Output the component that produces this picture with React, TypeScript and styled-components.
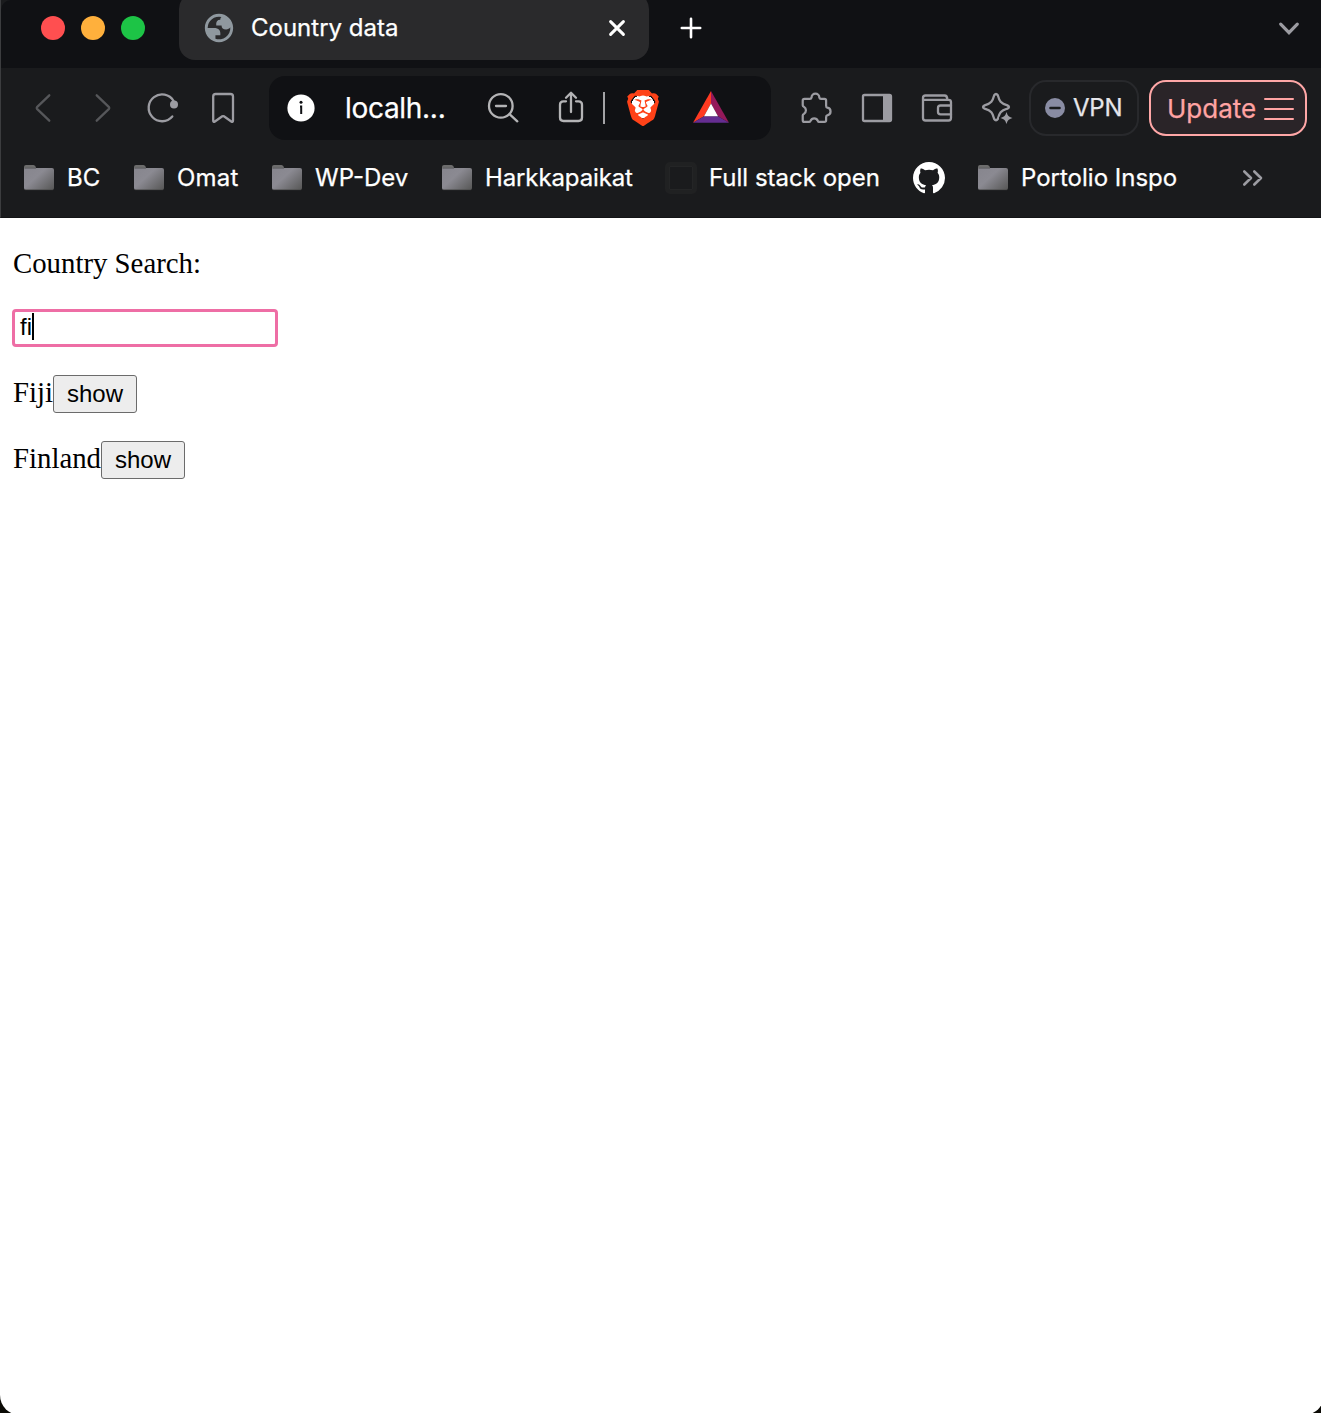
import React from "react";
import styled, { createGlobalStyle } from "styled-components";
import { SiBrave } from "react-icons/si";

const GlobalStyle = createGlobalStyle`
  * { box-sizing: border-box; }
  html, body { margin: 0; background: #0b0a05; }
  body { font-family: Inter, "Liberation Sans", sans-serif; }
`;

const Screen = styled.div`
  width: 1321px;
  height: 1413px;
  overflow: hidden;
`;

const BrowserWindow = styled.div`
  width: 1324px;
  height: 1415px;
  border-radius: 0 0 20px 20px;
  overflow: hidden;
  background: #fff;
  display: flex;
  flex-direction: column;
`;

const Chrome = styled.header`
  flex: none;
  height: 218px;
  background: #1a1b1d;
  border-left: 1px solid #3c3d3f;
  border-bottom: 1px solid #131416;
  -webkit-text-stroke: 0.25px currentColor;
`;

const TabStrip = styled.div`
  height: 68px;
  padding-left: 40px;
  padding-right: 23px;
  background: #101114;
  border-top-left-radius: 10px;
  display: flex;
  align-items: flex-start;
`;

const TrafficLights = styled.div`
  display: flex;
  gap: 16px;
  width: 138px;
  padding-top: 16px;
`;

const Light = styled.span<{ $color: string }>`
  width: 24px;
  height: 24px;
  border-radius: 50%;
  background: ${(p) => p.$color};
`;

const Tab = styled.div`
  width: 470px;
  height: 67px;
  margin-top: -7px;
  padding: 3px 16px 0 23px;
  border-radius: 16px;
  background: #2a2a2c;
  display: flex;
  align-items: center;
`;

const TabTitle = styled.span`
  flex: 1;
  margin-left: 15px;
  color: #fff;
  font-size: 24px;
  line-height: 30px;
`;

const StripButton = styled.span<{ $push?: boolean }>`
  display: flex;
  height: 56px;
  align-items: center;
  margin-left: ${(p) => (p.$push ? "auto" : "26px")};
`;

const NavRow = styled.div`
  height: 80px;
  padding-left: 12px;
  display: flex;
  align-items: center;
`;

const IconSlot = styled.span`
  width: 60px;
  display: flex;
  justify-content: center;
`;

const AddressBar = styled.div`
  width: 502px;
  height: 64px;
  margin: 0 16px;
  border-radius: 16px;
  background: #101114;
  display: flex;
  align-items: center;
  padding-left: 12px;
`;

const Url = styled.span`
  width: 138px;
  margin-left: 24px;
  color: #fff;
  font-size: 28px;
  line-height: 34px;
  letter-spacing: -0.3px;
`;

const ShareSlot = styled.span`
  display: flex;
  margin-left: 28px;
`;

const Separator = styled.span`
  width: 2px;
  height: 32px;
  margin: 0 22px 0 12px;
  background: #a3a3a6;
`;

const BraveFace = styled.span`
  width: 32px;
  height: 36px;
  margin-right: 30px;
  display: flex;
  justify-content: center;
  background: radial-gradient(ellipse 12px 12px at 50% 46%, #fff 98%, transparent 100%);

  svg {
    flex: none;
    transform: scaleX(1.04);
  }
`;

const VpnButton = styled.div`
  width: 110px;
  height: 56px;
  margin-left: 2px;
  padding-left: 14px;
  border: 2px solid #28292c;
  border-radius: 17px;
  display: flex;
  align-items: center;
  gap: 8px;
  color: #e6e6ea;
  font-size: 24px;
  line-height: 28px;
  letter-spacing: -0.2px;
`;

const UpdateButton = styled.div`
  width: 158px;
  height: 56px;
  margin-left: 10px;
  padding: 1px 11px 0 16px;
  border: 2px solid #ffa7a7;
  border-radius: 17px;
  background: #2a2428;
  display: flex;
  align-items: center;
  justify-content: space-between;
  color: #ffa3a3;
  font-size: 26px;
  line-height: 30px;
`;

const BookmarkRow = styled.div`
  height: 60px;
  padding-left: 23px;
  display: flex;
  align-items: center;
`;

const Bookmark = styled.div<{ $width: number; $tracking?: number }>`
  flex: none;
  width: ${(p) => p.$width}px;
  display: flex;
  align-items: center;
  gap: 13px;
  color: #fff;
  font-size: 24px;
  line-height: 30px;
  letter-spacing: ${(p) => p.$tracking ?? 0}px;
  white-space: nowrap;
`;

const FaintIcon = styled.span`
  width: 32px;
  height: 32px;
  margin: 0 -1px;
  border: 4px solid #202122;
  border-radius: 5px;
  box-shadow: inset 0 0 0 1px #242526;
`;

const Page = styled.main`
  flex: 1;
  padding: 28px 13px;
  color: #000;
  font-family: "Liberation Serif", serif;
  font-size: 28.8px;
`;

const Heading = styled.p`
  margin: 0;
  height: 34px;
  line-height: 35px;
`;

const SearchField = styled.div`
  width: 266px;
  height: 38px;
  margin: 29px 0 0 -1px;
  padding: 0 5px 3px;
  border: 3px solid #ee6ea5;
  border-radius: 4px;
  display: flex;
  align-items: center;
  font-family: "Liberation Sans", sans-serif;
  font-size: 24px;
  line-height: 26px;
`;

const Caret = styled.span`
  width: 2px;
  height: 27px;
  margin-left: -0.5px;
  background: #000;
`;

const CountryRow = styled.div`
  height: 38px;
  margin-top: 28px;
  display: flex;
  align-items: center;
`;

const CountryName = styled.span`
  height: 38px;
  line-height: 35px;
`;

const ShowButton = styled.button`
  width: 84px;
  height: 38px;
  padding: 0;
  border: 1px solid #6b6b6b;
  border-radius: 3px;
  background: #ededed;
  color: #000;
  font: 24px/36px "Liberation Sans", sans-serif;
`;

type GlyphProps = {
  box: string;
  width?: number;
  height?: number;
  color?: string;
  weight?: number;
  children: React.ReactNode;
};

const Glyph = ({ box, width = 40, height = 40, color = "#9c9ca2", weight = 2.3, children }: GlyphProps) => (
  <svg
    width={width}
    height={height}
    viewBox={box}
    fill="none"
    stroke={color}
    strokeWidth={weight}
    strokeLinecap="round"
    strokeLinejoin="round"
  >
    {children}
  </svg>
);

const Folder = () => (
  <svg width="30" height="26" viewBox="0 0 30 26">
    <defs>
      <linearGradient id="folder" x1="0" y1="0.1" x2="1" y2="0.9">
        <stop offset="0" stopColor="#87868e" />
        <stop offset="0.4" stopColor="#8b8a92" />
        <stop offset="1" stopColor="#5a5a5a" />
      </linearGradient>
    </defs>
    <path d="M0 6V2Q0 0 2 0H9.5Q11.5 0 12 2.6V6Z" fill="#6c6c6c" />
    <rect y="3" width="30" height="22" rx="2" fill="url(#folder)" />
    <path d="M1 3.2H12" stroke="#55555a" strokeWidth="0.8" />
    <path d="M1 24.7H29" stroke="#4b4b4b" strokeWidth="0.7" />
  </svg>
);

const folderMarks = [
  { name: "BC", width: 110, tracking: 0 },
  { name: "Omat", width: 138, tracking: 0.2 },
  { name: "WP-Dev", width: 170, tracking: 0 },
  { name: "Harkkapaikat", width: 224, tracking: -0.12 },
];

export default function App() {
  return (
    <Screen>
      <GlobalStyle />
      <BrowserWindow>
        <Chrome>
          <TabStrip>
            <TrafficLights>
              <Light $color="#ff4f50" />
              <Light $color="#ffb03c" />
              <Light $color="#1dc446" />
            </TrafficLights>
            <Tab>
              <svg width="34" height="34" viewBox="0 0 24 24" fill="#8f989f" fillRule="evenodd">
                <path d="M12 2c5.523 0 10 4.477 10 10s-4.477 10-10 10S2 17.523 2 12 6.477 2 12 2zM4 12h4.4c3.407.022 4.922 1.73 4.543 5.127H9.488v2.47a8.004 8.004 0 0 0 10.498-8.083C19.327 12.504 18.332 13 17 13c-2.137 0-3.206-.916-3.206-2.75h-3.748c-.274-2.728.683-4.092 2.87-4.092 0-.975.327-1.597.811-1.97A8.004 8.004 0 0 0 4 12z" />
              </svg>
              <TabTitle>Country data</TabTitle>
              <Glyph box="0 0 32 32" width={32} height={32} color="#fff" weight={3}>
                <path d="M9.6 9.6 22.4 22.4M22.4 9.6 9.6 22.4" />
              </Glyph>
            </Tab>
            <StripButton>
              <Glyph box="0 0 32 32" width={32} height={32} color="#fff" weight={2.6}>
                <path d="M16 6.8V25.2M6.8 16H25.2" />
              </Glyph>
            </StripButton>
            <StripButton $push>
              <Glyph box="1277 16 24 24" width={24} height={24} weight={3.2}>
                <path d="M1280.7 24.2 1289 32.7 1297.3 24.2" strokeLinejoin="miter" />
              </Glyph>
            </StripButton>
          </TabStrip>

          <NavRow>
            <IconSlot>
              <Glyph box="23 88 40 40" color="#56575a">
                <path d="M49.3 95.3 37 107.2Q36.4 108 37 108.8L49.3 120.7" />
              </Glyph>
            </IconSlot>
            <IconSlot>
              <Glyph box="83 88 40 40" color="#56575a">
                <path d="M96.7 95.3 109 107.2Q109.6 108 109 108.8L96.7 120.7" />
              </Glyph>
            </IconSlot>
            <IconSlot>
              <Glyph box="143 88 40 40">
                <path d="M172.3 116.5A13.4 13.4 0 1 1 173.6 101" />
                <circle cx="174" cy="104.6" r="4" fill="#9c9ca2" stroke="none" />
              </Glyph>
            </IconSlot>
            <IconSlot>
              <Glyph box="203 88 40 40">
                <path d="M213.2 120.6V96.5Q213.2 94 215.7 94H230.5Q233 94 233 96.5V120.6Q233 122.6 231.3 121.5L223.9 116.3Q223.1 115.8 222.3 116.3L214.9 121.5Q213.2 122.6 213.2 120.6Z" />
              </Glyph>
            </IconSlot>

            <AddressBar>
              <Glyph box="281 88 40 40" color="#101114" weight={2}>
                <circle cx="301" cy="108" r="13.6" fill="#fff" stroke="none" />
                <circle cx="301" cy="102.3" r="1.5" fill="#101114" stroke="none" />
                <path d="M300 106.6H301.2V114" strokeLinecap="butt" strokeLinejoin="miter" />
              </Glyph>
              <Url>localh...</Url>
              <Glyph box="483 88 40 40" color="#b4b4b6">
                <circle cx="500.8" cy="105.9" r="11.8" />
                <path d="M496 106H506M509.5 114.2 517.3 121.3" />
              </Glyph>
              <ShareSlot>
                <Glyph box="551 88 40 40" color="#b4b4b6">
                  <path d="M566 101.3H563.5Q560 101.3 560 104.8V117.5Q560 121 563.5 121H578.5Q582 121 582 117.5V104.8Q582 101.3 578.5 101.3H576" />
                  <path d="M571 112V93M566 97.8 571 92.8 576 97.8" />
                </Glyph>
              </ShareSlot>
              <Separator />
              <BraveFace>
                <SiBrave size={36} color="#ff4218" />
              </BraveFace>
              <svg width="44" height="40" viewBox="689 88 44 40">
                <path d="M711 91 711 103.5 704 116.3 693 122.7Z" fill="#ff3a21" />
                <path d="M711 91 711 103.5 718 116.3 729 122.7Z" fill="#94195a" />
                <path d="M693 122.7 704 116.3H718L729 122.7Z" fill="#652d91" />
                <path d="M711 103.5 718 116.3H704Z" fill="#fff" />
              </svg>
            </AddressBar>

            <IconSlot>
              <Glyph box="-3.2 -4 40 40">
                <path d="M4.5 6.5H9.5Q11 6.5 11.3 5A4 4 0 0 1 19.3 5Q19.6 6.5 21 6.5H24.5Q26.3 6.5 26.3 8.3V13.5Q26.3 15.2 27.5 15.5A4 4 0 0 1 27.5 23.4Q26.3 23.8 26.3 25.3V28.5Q26.3 30.2 24.5 30.2H18.6Q18 30.2 17.7 29A4 4 0 0 0 10.3 29Q10 30.2 9 30.2H4Q2.2 30.2 2.2 28.4V23.5Q2.2 22.4 3.3 22A4.2 4.2 0 0 0 3.3 14.6Q2.2 14.2 2.2 13V8.3Q2.2 6.5 4 6.5Z" transform="translate(0.4 0.6) scale(0.97)" />
              </Glyph>
            </IconSlot>
            <IconSlot>
              <Glyph box="857 88 40 40">
                <rect x="863" y="95" width="28" height="26" rx="1.5" />
                <rect x="883" y="95" width="8" height="26" fill="#9c9ca2" stroke="none" />
              </Glyph>
            </IconSlot>
            <IconSlot>
              <Glyph box="917 88 40 40">
                <path d="M923 99V118Q923 120.5 925.5 120.5H948.5Q951 120.5 951 118V102Q951 99.8 948.5 99.8H923V98Q923 95.5 925.5 95.5H944.5Q947.3 95.5 947.3 99.5" />
                <path d="M951 105.5H940.5Q938 105.5 938 108V112Q938 114.3 940.5 114.3H951" />
              </Glyph>
            </IconSlot>
            <IconSlot>
              <Glyph box="977 88 40 40">
                <path d="M994.2 95.2Q996 92.8 997.8 95.2C999.4 101 1000.6 103.2 1007.4 105.4Q1010.6 107 1007.4 108.6C1000.6 110.8 999.4 112.5 997.8 119Q996 121.5 994.2 119C992.6 112.5 991.4 110.8 984.6 108.6Q981.4 107 984.6 105.4C991.4 103.2 992.6 101 994.2 95.2Z" />
                <path d="M1006.5 112C1007.8 116 1008.5 116.7 1012.5 118C1008.5 119.3 1007.8 120 1006.5 124C1005.2 120 1004.5 119.3 1000.5 118C1004.5 116.7 1005.2 116 1006.5 112Z" fill="#9c9ca2" stroke="#1a1b1d" strokeWidth="3" paintOrder="stroke" />
              </Glyph>
            </IconSlot>

            <VpnButton>
              <Glyph box="0 0 20 20" width={20} height={20} color="#1a1b1d" weight={2.6}>
                <circle cx="10" cy="10" r="10" fill="#898ca3" stroke="none" />
                <path d="M5.5 10H14.5" />
              </Glyph>
              VPN
            </VpnButton>
            <UpdateButton>
              Update
              <Glyph box="0 0 30 24" width={30} height={24} color="#ffa3a3" weight={2}>
                <path d="M1 2H29M1 12H29M1 22H29" />
              </Glyph>
            </UpdateButton>
          </NavRow>

          <BookmarkRow>
            {folderMarks.map((mark) => (
              <Bookmark key={mark.name} $width={mark.width} $tracking={mark.tracking}>
                <Folder />
                {mark.name}
              </Bookmark>
            ))}
            <Bookmark $width={247}>
              <FaintIcon />
              Full stack open
            </Bookmark>
            <Bookmark $width={65}>
              <svg width="32" height="32" viewBox="0 0 16 16" fill="#fff">
                <path d="M8 0C3.58 0 0 3.58 0 8c0 3.54 2.29 6.53 5.47 7.59.4.07.55-.17.55-.38 0-.19-.01-.82-.01-1.49-2.01.37-2.53-.49-2.69-.94-.09-.23-.48-.94-.82-1.13-.28-.15-.68-.52-.01-.53.63-.01 1.08.58 1.23.82.72 1.21 1.87.87 2.33.66.07-.52.28-.87.51-1.07-1.78-.2-3.64-.89-3.64-3.95 0-.87.31-1.59.82-2.15-.08-.2-.36-1.02.08-2.12 0 0 .67-.21 2.2.82.64-.18 1.32-.27 2-.27s1.36.09 2 .27c1.53-1.04 2.2-.82 2.2-.82.44 1.1.16 1.92.08 2.12.51.56.82 1.27.82 2.15 0 3.07-1.87 3.75-3.65 3.95.29.25.54.73.54 1.48 0 1.07-.01 1.93-.01 2.2 0 .21.15.46.55.38A8.01 8.01 0 0 0 16 8c0-4.42-3.58-8-8-8Z" />
              </svg>
            </Bookmark>
            <Bookmark $width={263}>
              <Folder />
              Portolio Inspo
            </Bookmark>
            <Glyph box="1241 166 24 24" width={24} height={24} weight={2.6}>
              <path d="M1244.3 171.5 1251 178 1244.3 184.5M1254.3 171.5 1261 178 1254.3 184.5" />
            </Glyph>
          </BookmarkRow>
        </Chrome>

        <Page>
          <Heading>Country Search:</Heading>
          <SearchField>
            fi
            <Caret />
          </SearchField>
          {["Fiji", "Finland"].map((country) => (
            <CountryRow key={country}>
              <CountryName>{country}</CountryName>
              <ShowButton>show</ShowButton>
            </CountryRow>
          ))}
        </Page>
      </BrowserWindow>
    </Screen>
  );
}
